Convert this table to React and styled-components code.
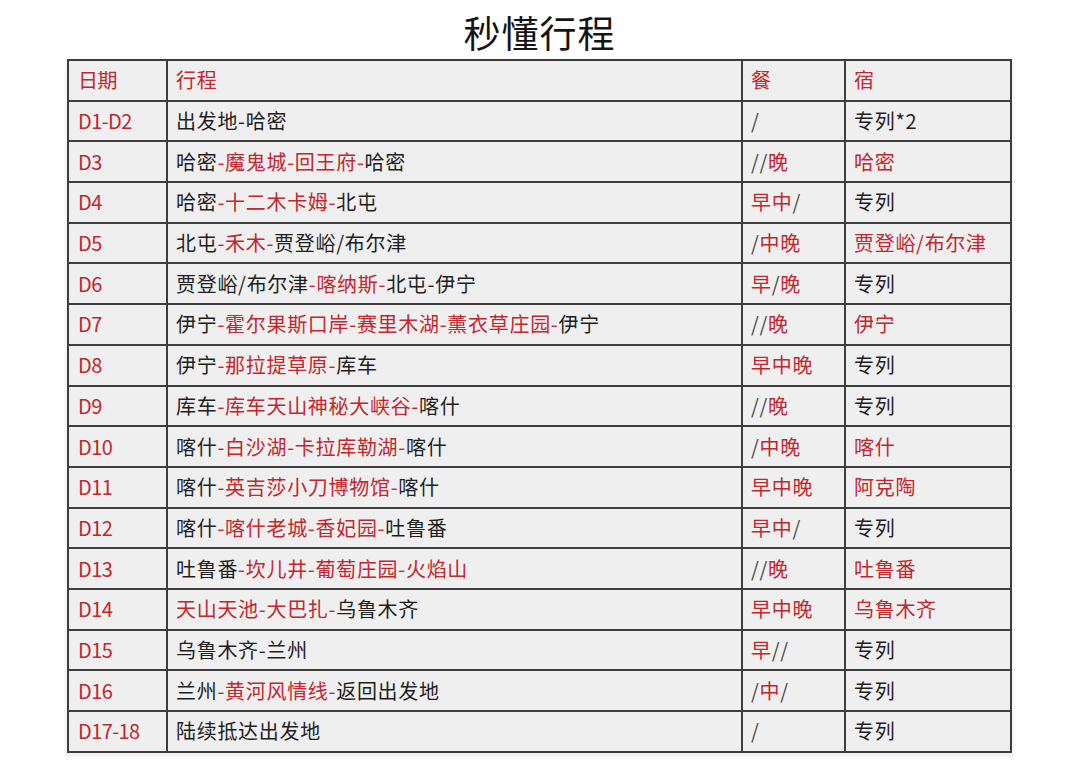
import React from 'react';
import styled, { createGlobalStyle } from 'styled-components';

const GlobalStyle = createGlobalStyle`
  html, body {
    margin: 0;
    padding: 0;
    background: #ffffff;
  }
  body {
    font-family: "Noto Sans CJK SC", "Noto Sans", sans-serif;
    color: #222222;
  }
`;

const RED = '#c2262e';

const Page = styled.div`
  width: 1080px;
  height: 768px;
  display: flex;
  flex-direction: column;
  padding-left: 67px;
  box-sizing: border-box;
  overflow: hidden;
`;

const Title = styled.h1`
  margin: 0;
  width: 945px;
  height: 59px;
  padding-top: 8px;
  box-sizing: border-box;
  text-align: center;
  font-size: 37px;
  font-weight: 400;
  letter-spacing: 1px;
  line-height: 1.3;
  color: #151515;
`;

const Grid = styled.div`
  width: 945px;
  display: grid;
  grid-template-columns: 97px 573px 101px 164px;
  grid-auto-rows: 38.7px;
  gap: 2px;
  padding: 2px;
  box-sizing: border-box;
  background: #3d3d3d;
  box-shadow: 0 3px 6px rgba(0, 0, 0, 0.08);
`;

const Cell = styled.div`
  background: #efefef;
  display: flex;
  align-items: center;
  padding-left: ${(p) => (p.$day ? '9px' : '8px')};
  font-size: 20px;
  font-weight: 400;
  letter-spacing: ${(p) => (p.$day ? '-0.6px' : '0.7px')};
  line-height: 1;
  white-space: nowrap;
  color: ${(p) => (p.$red ? RED : p.$muted ? '#4a4a4a' : '#1e1e1e')};
`;

const Hot = styled.span`
  color: ${RED};
`;

const rows = [
  ['D1-D2', '出发地-哈密', '/', '专列*2'],
  ['D3', '哈密{-魔鬼城-回王府-}哈密', '//{晚}', '{哈密}'],
  ['D4', '哈密{-十二木卡姆-}北屯', '{早中}/', '专列'],
  ['D5', '北屯{-禾木-}贾登峪/布尔津', '/{中晚}', '{贾登峪/布尔津}'],
  ['D6', '贾登峪/布尔津{-喀纳斯-}北屯-伊宁', '{早}/{晚}', '专列'],
  ['D7', '伊宁{-霍尔果斯口岸-赛里木湖-薰衣草庄园-}伊宁', '//{晚}', '{伊宁}'],
  ['D8', '伊宁{-那拉提草原-}库车', '{早中晚}', '专列'],
  ['D9', '库车{-库车天山神秘大峡谷-}喀什', '//{晚}', '专列'],
  ['D10', '喀什{-白沙湖-卡拉库勒湖-}喀什', '/{中晚}', '{喀什}'],
  ['D11', '喀什{-英吉莎小刀博物馆-}喀什', '{早中晚}', '{阿克陶}'],
  ['D12', '喀什{-喀什老城-香妃园-}吐鲁番', '{早中}/', '专列'],
  ['D13', '吐鲁番{-坎儿井-葡萄庄园-火焰山}', '//{晚}', '{吐鲁番}'],
  ['D14', '{天山天池-大巴扎-}乌鲁木齐', '{早中晚}', '{乌鲁木齐}'],
  ['D15', '乌鲁木齐-兰州', '{早}//', '专列'],
  ['D16', '兰州{-黄河风情线-}返回出发地', '/{中}/', '专列'],
  ['D17-18', '陆续抵达出发地', '/', '专列'],
];

// "{...}" marks the red parts of a cell
function Marked({ text }) {
  return text.split(/(\{[^}]*\})/).map((part, i) =>
    part.startsWith('{') ? <Hot key={i}>{part.slice(1, -1)}</Hot> : part
  );
}

export default function App() {
  return (
    <Page>
      <GlobalStyle />
      <Title>秒懂行程</Title>
      <Grid>
        <Cell $red $day>日期</Cell>
        <Cell $red>行程</Cell>
        <Cell $red>餐</Cell>
        <Cell $red>宿</Cell>
        {rows.map(([day, route, meals, stay]) => (
          <React.Fragment key={day}>
            <Cell $red $day>{day}</Cell>
            <Cell>
              <Marked text={route} />
            </Cell>
            <Cell $muted>
              <Marked text={meals} />
            </Cell>
            <Cell>
              <Marked text={stay} />
            </Cell>
          </React.Fragment>
        ))}
      </Grid>
    </Page>
  );
}
